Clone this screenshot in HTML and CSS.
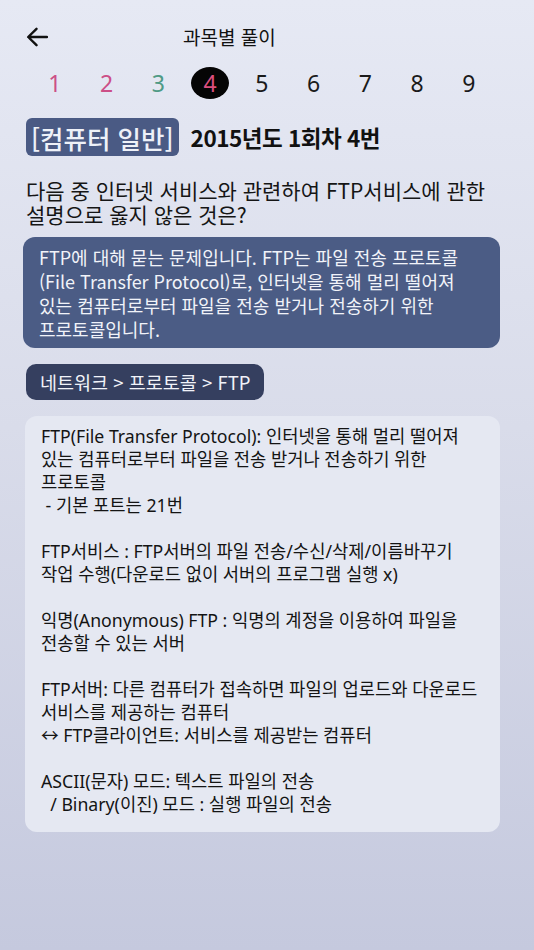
FILE: index.html
```html
<!DOCTYPE html>
<html lang="ko">
<head>
<meta charset="utf-8">
<title>과목별 풀이</title>
<link rel="stylesheet" href="styles.css">
</head>
<body>
<div class="page">
  <header class="topbar">
    <button class="back" aria-label="뒤로">
      <svg width="22" height="20" viewBox="0 0 22 20"><path d="M21 10H2.5M10.5 1.8L2.2 10l8.3 8.2" fill="none" stroke="#111" stroke-width="2.4" stroke-linecap="round" stroke-linejoin="round"/></svg>
    </button>
    <h1 class="title">과목별 풀이</h1>
  </header>

  <nav class="nums">
    <span class="num pink">1</span>
    <span class="num pink">2</span>
    <span class="num teal">3</span>
    <span class="num current">4</span>
    <span class="num">5</span>
    <span class="num">6</span>
    <span class="num">7</span>
    <span class="num">8</span>
    <span class="num">9</span>
  </nav>

  <div class="subject">
    <span class="tag">[컴퓨터 일반]</span>
    <span class="qid">2015년도 1회차 4번</span>
  </div>

  <div class="question">
    <div class="qln">다음 중 인터넷 서비스와 관련하여 FTP서비스에 관한</div>
    <div class="qln">설명으로 옳지 않은 것은?</div>
  </div>

  <div class="explain">
    <div class="ln">FTP에 대해 묻는 문제입니다. FTP는 파일 전송 프로토콜</div>
    <div class="ln">(File Transfer Protocol)로, 인터넷을 통해 멀리 떨어져</div>
    <div class="ln">있는 컴퓨터로부터 파일을 전송 받거나 전송하기 위한</div>
    <div class="ln">프로토콜입니다.</div>
  </div>

  <div class="crumb">네트워크 &gt; 프로토콜 &gt; FTP</div>

  <div class="card">
    <div class="ln">FTP(File Transfer Protocol): 인터넷을 통해 멀리 떨어져</div>
    <div class="ln">있는 컴퓨터로부터 파일을 전송 받거나 전송하기 위한</div>
    <div class="ln">프로토콜</div>
    <div class="ln"> - 기본 포트는 21번</div>
    <div class="ln"> </div>
    <div class="ln">FTP서비스 : FTP서버의 파일 전송/수신/삭제/이름바꾸기</div>
    <div class="ln">작업 수행(다운로드 없이 서버의 프로그램 실행 x)</div>
    <div class="ln"> </div>
    <div class="ln">익명(Anonymous) FTP : 익명의 계정을 이용하여 파일을</div>
    <div class="ln">전송할 수 있는 서버</div>
    <div class="ln"> </div>
    <div class="ln">FTP서버: 다른 컴퓨터가 접속하면 파일의 업로드와 다운로드</div>
    <div class="ln">서비스를 제공하는 컴퓨터</div>
    <div class="ln">↔ FTP클라이언트: 서비스를 제공받는 컴퓨터</div>
    <div class="ln"> </div>
    <div class="ln">ASCII(문자) 모드: 텍스트 파일의 전송</div>
    <div class="ln">  / Binary(이진) 모드 : 실행 파일의 전송</div>
  </div>
</div>
</body>
</html>
```

FILE: styles.css
```css
* { box-sizing: border-box; }
html, body { margin: 0; padding: 0; }
body {
  font-family: "Noto Sans CJK KR", "Noto Sans", sans-serif;
  color: #151515;
}
.page {
  width: 534px;
  min-height: 950px;
  background: linear-gradient(180deg, #e6e9f4 0%, #d9dcea 45%, #c5c9de 100%);
  padding: 26px 0 0 0;
  overflow: hidden;
}
.topbar {
  display: flex;
  align-items: center;
  height: 22px;
  padding-left: 26px;
}
.back {
  border: 0;
  background: none;
  padding: 0;
  width: 22px;
  height: 20px;
  display: flex;
}
.title {
  margin: 0 0 0 135px;
  font-size: 19px;
  font-weight: 400;
  line-height: 22px;
  color: #111;
}
.nums {
  display: flex;
  margin-top: 18px;
  padding-left: 29px;
  height: 34px;
  align-items: center;
}
.num {
  width: 51.75px;
  display: flex;
  justify-content: center;
  align-items: center;
  font-family: "Noto Sans", sans-serif;
  font-size: 23px;
  line-height: 32px;
  color: #1a1a1a;
}
.num.pink { color: #cc4f87; }
.num.teal { color: #4f9a85; }
.num.current {
  color: #dc4f7e;
  position: relative;
  isolation: isolate;
}
.num.current::before {
  content: "";
  position: absolute;
  left: 6.5px;
  top: 50%;
  margin-top: -16px;
  width: 38px;
  height: 32px;
  border-radius: 50%;
  background: #050505;
  z-index: -1;
}
.subject {
  display: flex;
  align-items: center;
  gap: 12px;
  margin: 18px 0 0 26px;
}
.tag {
  height: 38px;
  padding: 0 5px;
  display: flex;
  align-items: center;
  background: #4a5a84;
  color: #eef1f8;
  border-radius: 6px;
  font-size: 25.5px;
  font-weight: 500;
}
.qid {
  font-size: 22.5px;
  font-weight: 700;
  color: #111;
  letter-spacing: -0.5px;
}
.question {
  margin: 22px 0 0 26px;
  font-size: 21px;
  line-height: 24px;
  color: #151515;
}
.qln { white-space: pre; }
.explain {
  margin: 11px 0 0 23px;
  width: 477px;
  padding: 7.5px 16px;
  background: #4b5c85;
  border-radius: 12px;
  color: #f1f3f9;
  font-size: 18px;
  line-height: 24px;
}
.ln { white-space: pre; }
.crumb {
  display: inline-flex;
  align-items: center;
  height: 36px;
  margin: 16px 0 0 26px;
  padding: 0 14px;
  background: #353f5f;
  border-radius: 10px;
  color: #f1f3f9;
  font-size: 18.5px;
}
.card {
  margin: 16px 0 0 25px;
  width: 475px;
  padding: 8.5px 16px 16px;
  background: #e5e8f2;
  border-radius: 12px;
  font-family: "Noto Sans", "Noto Sans CJK KR", sans-serif;
  font-size: 17.7px;
  line-height: 23px;
  color: #141414;
}
```
